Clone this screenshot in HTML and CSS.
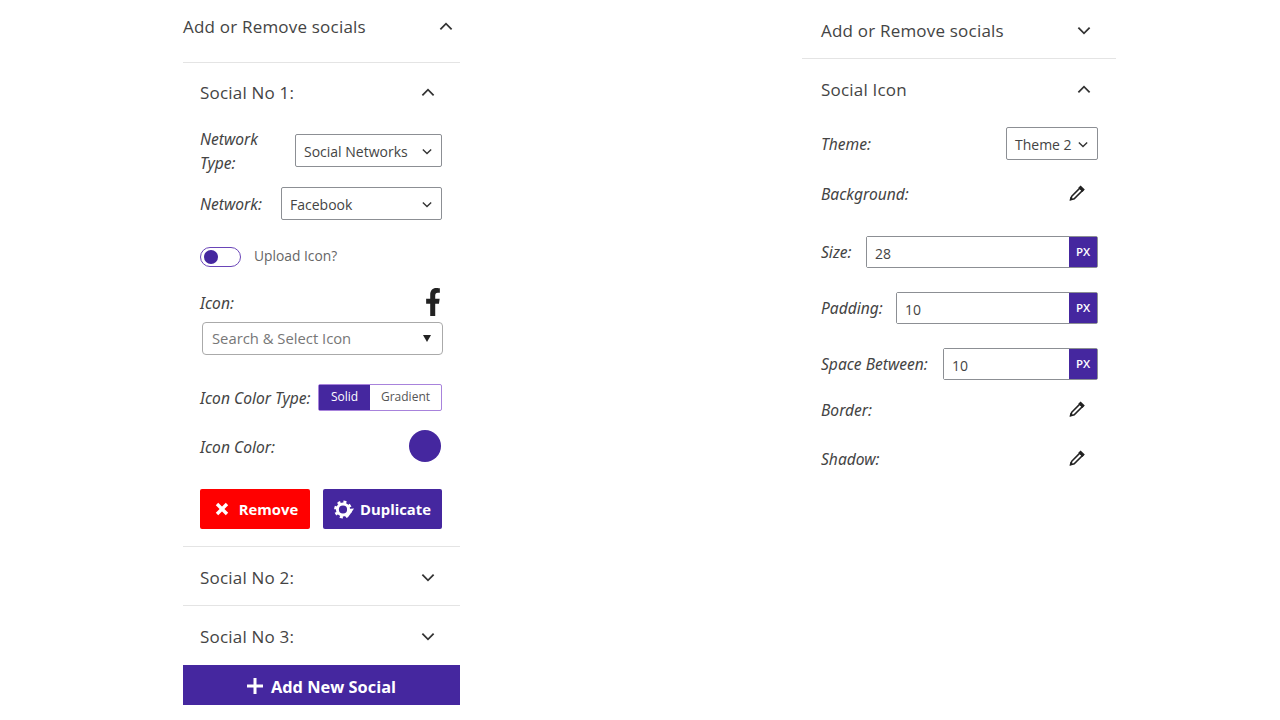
FILE: index.html
```html
<!DOCTYPE html>
<html>
	<head>
		<title>Social icons settings</title>
		<link rel="stylesheet" href="styles.css">
	</head>
	<body>
		<svg class="defs" width="0" height="0">
			<symbol id="down" viewBox="0 0 12 8"><path d="M1 1.5l5 5 5-5" fill="none" stroke="currentColor" stroke-width="1.6"/></symbol>
			<symbol id="up" viewBox="0 0 12 8"><path d="M1 6.5l5-5 5 5" fill="none" stroke="currentColor" stroke-width="1.6"/></symbol>
			<symbol id="pencil" viewBox="0 0 16 16">
				<path d="M11 3l2.5 2.5-8.3 8.3-3.4 .9 .9-3.4z" fill="none" stroke="#222" stroke-width="1.6"/>
				<path d="M11.6 .4l4.2 4.2-2.3 2.3-4.2-4.2zM.5 15.6l1-3.9 2.9 2.9z" fill="#222"/>
			</symbol>
		</svg>
		<div id="wrap">
			<!-- left panel -->
			<div class="panel panel-left">
				<div class="top-head">
					<span class="title">Add or Remove socials</span>
					<svg class="chev"><use href="#up"/></svg>
				</div>
				<div class="social">
					<div class="social-head">
						<span class="title">Social No 1:</span>
						<svg class="chev"><use href="#up"/></svg>
					</div>
					<div class="row row-type">
						<span class="label label-wrap">Network Type:</span>
						<div class="select select-type"><span>Social Networks</span><svg class="chev-sm"><use href="#down"/></svg></div>
					</div>
					<div class="row row-network">
						<span class="label">Network:</span>
						<div class="select select-network"><span>Facebook</span><svg class="chev-sm"><use href="#down"/></svg></div>
					</div>
					<div class="row-toggle">
						<div class="toggle"><div class="dot"></div></div>
						<span class="toggle-text">Upload Icon?</span>
					</div>
					<div class="row row-icon">
						<span class="label">Icon:</span>
						<svg class="fb" viewBox="0 0 320 512" preserveAspectRatio="none"><path d="M279.14 288l14.22-92.66h-88.91v-60.13c0-25.35 12.42-50.06 52.24-50.06h40.42V6.26S260.43 0 225.36 0c-73.22 0-121.08 44.38-121.08 124.72v70.62H22.89V288h81.39v224h100.17V288z"/></svg>
					</div>
					<div class="icon-search">
						<span>Search &amp; Select Icon</span>
						<i class="caret"></i>
					</div>
					<div class="row row-color-type">
						<span class="label">Icon Color Type:</span>
						<div class="switch">
							<span class="switch-on">Solid</span>
							<span class="switch-off">Gradient</span>
						</div>
					</div>
					<div class="row row-color">
						<span class="label">Icon Color:</span>
						<div class="swatch"></div>
					</div>
					<div class="row row-btns">
						<button class="btn btn-remove" type="button">
							<svg width="14" height="14" viewBox="0 0 14 14"><path d="M2 2l10 10M12 2L2 12" stroke="#fff" stroke-width="3.4" fill="none"/></svg>
							Remove
						</button>
						<button class="btn btn-dup" type="button">
							<svg width="21" height="19" viewBox="0 0 21 19">
								<circle cx="9" cy="9.5" r="5.6" fill="none" stroke="#fff" stroke-width="3"/>
								<circle cx="9" cy="9.5" r="7.6" fill="none" stroke="#fff" stroke-width="2.6" stroke-dasharray="3 3"/>
								<path d="M13 9l7-.5-4 6-3 3.5-2-2 3-3z" fill="#fff"/>
							</svg>
							Duplicate
						</button>
					</div>
				</div>
				<div class="social-closed">
					<div class="social-head">
						<span class="title">Social No 2:</span>
						<svg class="chev"><use href="#down"/></svg>
					</div>
				</div>
				<div class="social-closed last">
					<div class="social-head">
						<span class="title">Social No 3:</span>
						<svg class="chev"><use href="#down"/></svg>
					</div>
				</div>
				<button class="btn-add" type="button">
					<svg width="16" height="16" viewBox="0 0 16 16"><path d="M8 0v16M0 8h16" stroke="#fff" stroke-width="3" fill="none"/></svg>
					Add New Social
				</button>
			</div>

			<!-- right panel -->
			<div class="panel panel-right">
				<div class="right-head">
					<span class="title">Add or Remove socials</span>
					<svg class="chev"><use href="#down"/></svg>
				</div>
				<div class="right-sub">
					<span class="title">Social Icon</span>
					<svg class="chev"><use href="#up"/></svg>
				</div>
				<div class="right-body">
					<div class="row row-theme">
						<span class="label">Theme:</span>
						<div class="select select-theme"><span>Theme 2</span><svg class="chev-sm"><use href="#down"/></svg></div>
					</div>
					<div class="row row-edit row-bg">
						<span class="label">Background:</span>
						<svg class="pencil"><use href="#pencil"/></svg>
					</div>
					<div class="row row-num row-size">
						<span class="label">Size:</span>
						<div class="num num-size"><input type="text" value="28"><span class="px">PX</span></div>
					</div>
					<div class="row row-num">
						<span class="label">Padding:</span>
						<div class="num num-padding"><input type="text" value="10"><span class="px">PX</span></div>
					</div>
					<div class="row row-num">
						<span class="label">Space Between:</span>
						<div class="num num-space"><input type="text" value="10"><span class="px">PX</span></div>
					</div>
					<div class="row row-edit row-border">
						<span class="label">Border:</span>
						<svg class="pencil"><use href="#pencil"/></svg>
					</div>
					<div class="row row-edit row-shadow">
						<span class="label">Shadow:</span>
						<svg class="pencil"><use href="#pencil"/></svg>
					</div>
				</div>
			</div>
		</div>
	</body>
</html>
```

FILE: styles.css
```css
body {
	margin: 0;
	background-color: #ffffff;
	color: #444444;
	font-family: "Open Sans", "Noto Sans", sans-serif;
}
.defs {
	display: block;
	height: 0;
}
#wrap {
	display: flex;
	gap: 342px;
	padding-left: 183px;
}
.panel-left {
	width: 277px;
}
.panel-right {
	width: 314px;
}
.title {
	font-size: 17px;
	font-weight: 500;
	letter-spacing: .2px;
	color: #444444;
}
.chev {
	width: 14px;
	height: 9px;
	color: #333333;
}
.chev-sm {
	width: 10px;
	height: 7px;
	color: #333333;
}

/* headers */
.top-head {
	display: flex;
	justify-content: space-between;
	align-items: center;
	height: 53px;
	padding: 0 7px 9px 0;
	border-bottom: 1px solid #e4e4e4;
}
.social {
	padding: 0 18px 17px 17px;
	border-bottom: 1px solid #e4e4e4;
}
.social-head {
	display: flex;
	justify-content: space-between;
	align-items: center;
	box-sizing: border-box;
	height: 58px;
	padding-right: 7px;
}
.social-closed {
	padding: 0 18px 0 17px;
	border-bottom: 1px solid #e4e4e4;
}
.social-closed .social-head {
	padding-top: 2px;
}
.social-closed.last {
	border-bottom: 0;
}
.social-closed.last .social-head {
	height: 59px;
}

/* rows */
.row {
	display: flex;
	justify-content: space-between;
	align-items: center;
}
.label {
	padding-top: 1px;
	font-family: "Noto Sans", sans-serif;
	font-size: 15.6px;
	font-style: italic;
	font-weight: 400;
	line-height: 24px;
	color: #444444;
	white-space: nowrap;
}
.label-wrap {
	width: 80px;
	white-space: normal;
}
.row-type {
	align-items: flex-start;
	margin-top: 5px;
}
.row-type .select {
	margin-top: 8px;
}
.row-network {
	margin-top: 12px;
}
.select {
	display: flex;
	justify-content: space-between;
	align-items: center;
	box-sizing: border-box;
	height: 33px;
	padding: 2px 9px 0 8px;
	border: 1px solid #8c8f94;
	border-radius: 2px;
	font-size: 14px;
	color: #444444;
}
.select-type {
	width: 147px;
}
.select-network {
	width: 161px;
}
.select-theme {
	width: 92px;
}

/* toggle */
.row-toggle {
	display: flex;
	align-items: center;
	margin-top: 27px;
}
.toggle {
	box-sizing: border-box;
	width: 41px;
	height: 20px;
	padding: 2px 3px;
	border: 1px solid #6a45b8;
	border-radius: 10px;
}
.dot {
	width: 14px;
	height: 14px;
	border-radius: 50%;
	background-color: #45279f;
}
.toggle-text {
	margin: -3px 0 0 13px;
	font-size: 13.8px;
	color: #666666;
}

/* icon */
.row-icon {
	height: 28px;
	margin-top: 21px;
}
.fb {
	width: 16px;
	height: 28px;
	margin-right: 1px;
	fill: #222222;
}
.icon-search {
	display: flex;
	justify-content: space-between;
	align-items: center;
	box-sizing: border-box;
	width: 241px;
	height: 33px;
	margin: 6px 0 0 2px;
	padding: 0 11px 2px 9px;
	border: 1px solid #aaaaaa;
	border-radius: 4px;
	font-size: 14.8px;
	color: #777777;
}
.caret {
	width: 0;
	height: 0;
	margin-top: 2px;
	border-left: 4.5px solid transparent;
	border-right: 4.5px solid transparent;
	border-top: 7px solid #222222;
}

/* color */
.row-color-type {
	margin-top: 29px;
}
.switch {
	display: flex;
	box-sizing: border-box;
	width: 124px;
	height: 27px;
	border: 1px solid #a883dc;
	border-radius: 2px;
	font-size: 12px;
	line-height: 24px;
	text-align: center;
}
.switch-on {
	width: 51px;
	background-color: #45279f;
	color: #ffffff;
}
.switch-off {
	flex: 1;
	color: #555555;
}
.row-color {
	margin-top: 19px;
}
.swatch {
	width: 32px;
	height: 32px;
	margin-right: 1px;
	border-radius: 50%;
	background-color: #45279f;
}

/* buttons */
.row-btns {
	margin-top: 27px;
}
.btn {
	display: flex;
	justify-content: center;
	align-items: center;
	height: 40px;
	padding: 0;
	border: 0;
	border-radius: 2px;
	color: #ffffff;
	font-family: inherit;
	font-size: 14.8px;
	font-weight: 700;
}
.btn-remove {
	width: 110px;
	gap: 10px;
	padding-left: 3px;
	background-color: #ff0000;
}
.btn-dup {
	width: 119px;
	gap: 5px;
	background-color: #45279f;
}
.btn-add {
	display: flex;
	justify-content: center;
	align-items: center;
	gap: 8px;
	width: 100%;
	height: 40px;
	padding: 2px 0 0;
	border: 0;
	background-color: #45279f;
	color: #ffffff;
	font-family: inherit;
	font-size: 16.4px;
	font-weight: 700;
}

/* right panel */
.right-head {
	display: flex;
	justify-content: space-between;
	align-items: center;
	box-sizing: border-box;
	height: 59px;
	padding: 2px 25px 0 19px;
	border-bottom: 1px solid #e4e4e4;
}
.right-sub {
	display: flex;
	justify-content: space-between;
	align-items: center;
	height: 60px;
	padding: 0 25px 0 19px;
}
.right-body {
	padding: 0 18px 0 19px;
}
.row-theme {
	margin-top: 8px;
}
.row-edit {
	height: 32px;
}
.row-edit .label,
.row-num .label {
	padding-top: 0;
}
.pencil {
	width: 16px;
	height: 16px;
	margin: -2px 13px 0 0;
}
.row-bg {
	margin-top: 18px;
}
.row-num {
	margin-top: 24px;
}
.row-size {
	margin-top: 26px;
}
.num {
	display: flex;
	box-sizing: border-box;
	height: 32px;
	border: 1px solid #8c8f94;
	border-radius: 2px;
}
.num-size {
	width: 232px;
}
.num-padding {
	width: 202px;
}
.num-space {
	width: 155px;
}
.num input {
	flex: 1;
	min-width: 0;
	padding: 2px 8px 0;
	border: 0;
	outline: 0;
	font-family: inherit;
	font-size: 14px;
	color: #444444;
}
.px {
	width: 28px;
	background-color: #45279f;
	color: #ffffff;
	font-size: 11.5px;
	font-weight: 600;
	line-height: 30px;
	text-align: center;
}
.row-border {
	margin-top: 14px;
}
.row-shadow {
	margin-top: 17px;
}
```
